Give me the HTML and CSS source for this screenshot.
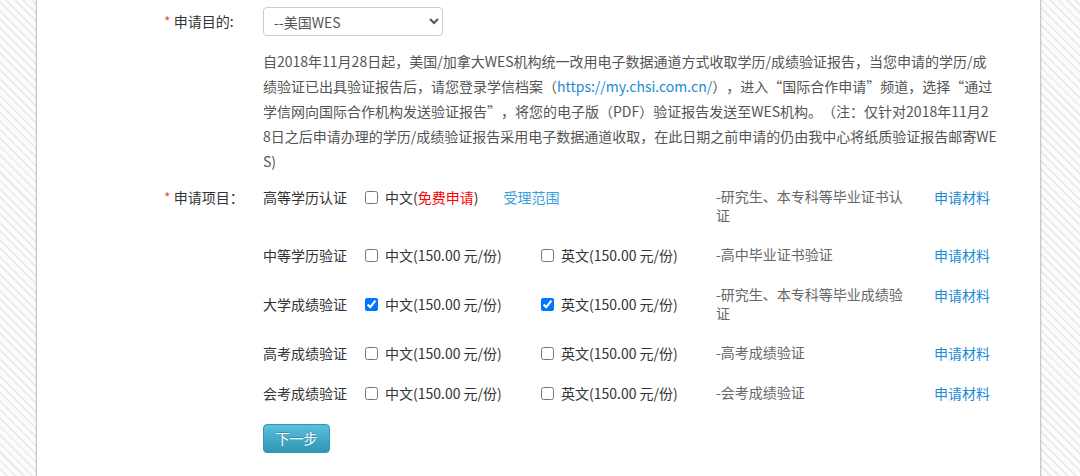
FILE: index.html
```html
<!DOCTYPE html>
<html>

<head>
    <meta charset="utf-8">
    <meta name="viewport" content="width=device-width, initial-scale=1.0">
    <title>学历学位认证申请</title>
    <link rel="stylesheet" href="styles.css">
</head>

<body>
    <div class="panel">
        <div class="form-row">
            <label class="form-label form-label--select"><span class="req">*</span> 申请目的:</label>
            <div class="form-field">
                <select class="purpose-select" name="purpose">
                    <option value="wes">--美国WES</option>
                </select>
                <p class="notice">自2018年11月28日起，美国/加拿大WES机构统一改用电子数据通道方式收取学历/成绩验证报告，当您申请的学历/成<br>绩验证已出具验证报告后，请您登录学信档案（<a class="link" href="#">https://my.chsi.com.cn/</a>），进入“国际合作申请”频道，选择“通过<br>学信网向国际合作机构发送验证报告”，将您的电子版（PDF）验证报告发送至WES机构。（注：仅针对2018年11月2<br>8日之后申请办理的学历/成绩验证报告采用电子数据通道收取，在此日期之前申请的仍由我中心将纸质验证报告邮寄WE<br>S)</p>
            </div>
        </div>
        <div class="form-row">
            <label class="form-label form-label--items"><span class="req">*</span> 申请项目：</label>
            <div class="form-field">
                <div class="item-row item-row--top">
                    <div class="item-name">高等学历认证</div>
                    <label class="item-option item-option--wide"><input type="checkbox"> 中文(<span class="free">免费申请</span>)<a class="link scope-link" href="#">受理范围</a></label>
                    <div class="item-desc">-研究生、本专科等毕业证书认证</div>
                    <a class="link item-link" href="#">申请材料</a>
                </div>
                <div class="item-row">
                    <div class="item-name">中等学历验证</div>
                    <label class="item-option"><input type="checkbox"> 中文(150.00 元/份)</label>
                    <label class="item-option"><input type="checkbox"> 英文(150.00 元/份)</label>
                    <div class="item-desc">-高中毕业证书验证</div>
                    <a class="link item-link" href="#">申请材料</a>
                </div>
                <div class="item-row">
                    <div class="item-name">大学成绩验证</div>
                    <label class="item-option"><input type="checkbox" checked> 中文(150.00 元/份)</label>
                    <label class="item-option"><input type="checkbox" checked> 英文(150.00 元/份)</label>
                    <div class="item-desc">-研究生、本专科等毕业成绩验证</div>
                    <a class="link item-link" href="#">申请材料</a>
                </div>
                <div class="item-row">
                    <div class="item-name">高考成绩验证</div>
                    <label class="item-option"><input type="checkbox"> 中文(150.00 元/份)</label>
                    <label class="item-option"><input type="checkbox"> 英文(150.00 元/份)</label>
                    <div class="item-desc">-高考成绩验证</div>
                    <a class="link item-link" href="#">申请材料</a>
                </div>
                <div class="item-row">
                    <div class="item-name">会考成绩验证</div>
                    <label class="item-option"><input type="checkbox"> 中文(150.00 元/份)</label>
                    <label class="item-option"><input type="checkbox"> 英文(150.00 元/份)</label>
                    <div class="item-desc">-会考成绩验证</div>
                    <a class="link item-link" href="#">申请材料</a>
                </div>
                <a class="next-btn" href="#">下一步</a>
            </div>
        </div>
    </div>
</body>

</html>
```

FILE: styles.css
```css
html {
    font-family: "Noto Sans CJK SC", "Noto Sans", sans-serif;
    font-size: 14px;
    color: #333;
    text-spacing-trim: space-all;
}

body {
    margin: 0;
    height: 476px;
    overflow: hidden;
    background-color: #fcfcfc;
    background-image: repeating-linear-gradient(45deg, #fcfcfc 0, #fcfcfc 4px, #ececec 4px, #ececec 6px);
}

.panel {
    margin-left: 36px;
    width: 1003px;
    min-height: 476px;
    padding-top: 7px;
    background: white;
    border-left: 1px solid #c8c8c8;
    border-right: 1px solid #c8c8c8;
    box-shadow: 0 0 2px rgba(0, 0, 0, 0.15);
}

.form-row {
    display: flex;
}

.form-label {
    width: 99px;
    padding-left: 127px;
    color: #333;
    flex-shrink: 0;
}

.form-label--select {
    line-height: 29px;
}

.form-label--items {
    padding-top: 10px;
    line-height: 20px;
}

.req {
    color: #e8592e;
}

.form-field {
    flex: 1;
}

.purpose-select {
    display: block;
    width: 180px;
    height: 29px;
    padding: 0 6px;
    border: 1px solid #ccc;
    border-radius: 4px;
    background: white;
    color: #555;
    font-family: inherit;
    font-size: 14px;
}

.notice {
    width: 760px;
    margin: 13px 0 3px;
    line-height: 25px;
    color: #555;
    word-break: break-all;
}

.link {
    color: #1b8bd5;
    text-decoration: none;
}

.item-row {
    display: grid;
    grid-template-columns: 102px 176px 175px 218px auto;
    align-items: center;
    padding: 10px 0;
    line-height: 20px;
}

.item-row--top {
    align-items: start;
}

.item-name {
    color: #333;
}

.item-option {
    display: flex;
    align-items: center;
    color: #333;
    white-space: nowrap;
}

.item-option--wide {
    grid-column: span 2;
}

.item-option input {
    width: 13px;
    height: 13px;
    margin: 0 7px 0 0;
}

.free {
    color: #ff0000;
}

.scope-link {
    margin-left: 25px;
    color: #3aa0de;
}

.item-desc {
    width: 195px;
    align-self: start;
    line-height: 19px;
    color: #666;
}

.item-link {
    align-self: start;
}

.next-btn {
    display: inline-block;
    margin-top: 11px;
    width: 65px;
    height: 27px;
    line-height: 27px;
    text-align: center;
    color: white;
    text-decoration: none;
    border: 1px solid #2f96b4;
    border-radius: 4px;
    background: linear-gradient(#5bc0de, #2f96b4);
    text-shadow: 0 -1px 0 rgba(0, 0, 0, 0.2);
}
```
